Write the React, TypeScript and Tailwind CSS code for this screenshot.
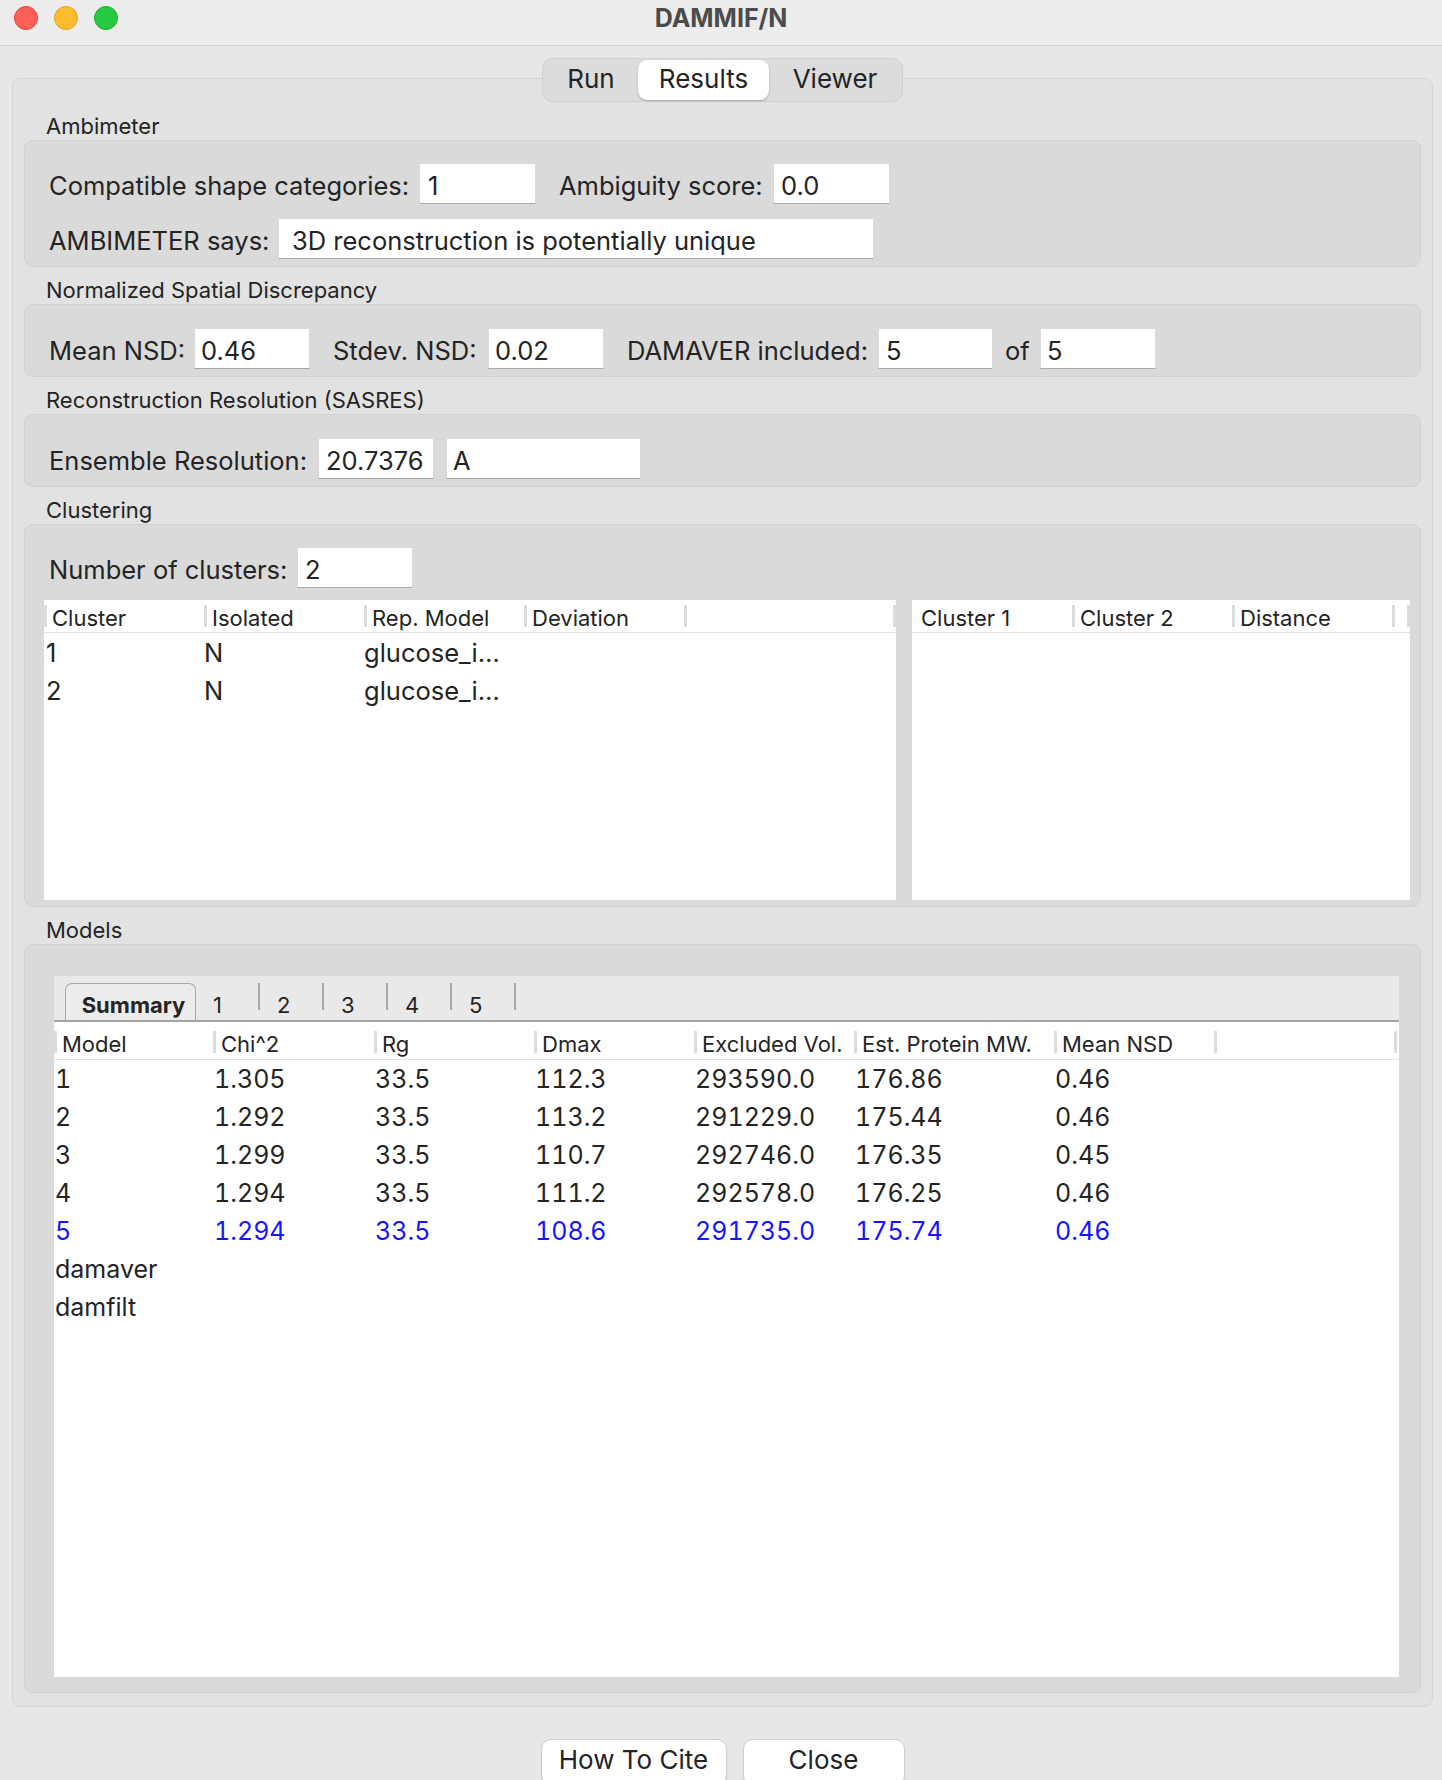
import React from "react";

type Kids = { children?: React.ReactNode };

function Field({ className, children }: { className: string } & Kids) {
  return (
    <div
      className={
        "h-[41px] shrink-0 bg-white border border-[#dadada] border-b-[#a9a9a9] flex items-center pt-[5px] text-[25.5px] leading-none whitespace-nowrap " +
        className
      }
    >
      {children}
    </div>
  );
}

function Label({ className, children }: { className: string } & Kids) {
  return (
    <span className={"shrink-0 whitespace-nowrap text-[25.5px] leading-none pt-[5px] " + className}>{children}</span>
  );
}

function GroupTitle({ first, children }: { first?: boolean } & Kids) {
  return (
    <div className={"h-[27px] leading-[27px] text-[22px] pl-[22px] " + (first ? "" : "mt-[10px]")}>{children}</div>
  );
}

function Bar() {
  return <div className="w-[3px] h-[22px] bg-[#dcdcdc] shrink-0" />;
}

function HeadCell({ className, label, bar = true }: { className: string; label: string; bar?: boolean }) {
  return (
    <div className={"h-full flex items-center shrink-0 " + className}>
      {bar && <Bar />}
      <span className={"text-[22px] leading-none whitespace-nowrap pt-[4px] " + (bar ? "ml-[5px]" : "ml-[9px]")}>
        {label}
      </span>
    </div>
  );
}

const models = [
  ["1", "1.305", "33.5", "112.3", "293590.0", "176.86", "0.46"],
  ["2", "1.292", "33.5", "113.2", "291229.0", "175.44", "0.46"],
  ["3", "1.299", "33.5", "110.7", "292746.0", "176.35", "0.45"],
  ["4", "1.294", "33.5", "111.2", "292578.0", "176.25", "0.46"],
  ["5", "1.294", "33.5", "108.6", "291735.0", "175.74", "0.46"],
  ["damaver", "", "", "", "", "", ""],
  ["damfilt", "", "", "", "", "", ""],
];

const modelCols = ["w-[159px]", "w-[161px]", "w-[160px]", "w-[160px]", "w-[160px]", "w-[200px]", "w-[160px]"];

export default function App() {
  return (
    <div className="w-[1442px] h-[1780px] overflow-hidden bg-[#e7e7e7] font-['Inter','Noto_Sans',sans-serif] text-[#242424] flex flex-col">
      {/* window title bar */}
      <div className="h-[46px] shrink-0 bg-[#ececec] border-b border-[#d0d0d0] grid grid-cols-[1fr_auto_1fr] items-center pb-[9px]">
        <div className="flex gap-[16px] pl-[14px]">
          <div className="w-[24px] h-[24px] rounded-full bg-[#fe5f57] border border-[#e2463f]" />
          <div className="w-[24px] h-[24px] rounded-full bg-[#febc2e] border border-[#e0a228]" />
          <div className="w-[24px] h-[24px] rounded-full bg-[#28c840] border border-[#1fad32]" />
        </div>
        <div className="text-[25px] font-bold text-[#4b4b4b] leading-none">DAMMIF/N</div>
        <div />
      </div>

      <div className="pl-[12px] pr-[9px] flex flex-col">
        {/* segmented tab control */}
        <div className="mt-[12px] self-center relative z-10 -mb-[24px] h-[44px] w-[361px] rounded-[11px] bg-[#dcdcdc] border border-[#d0d0d0] flex items-center px-[1px] text-[26px] leading-none">
          <div className="w-[94px] text-center pb-[3px]">Run</div>
          <div className="w-[131px] h-[40px] bg-white rounded-[9px] shadow-[0_1px_2px_rgba(0,0,0,0.25)] flex items-center justify-center pb-[3px]">
            Results
          </div>
          <div className="flex-1 text-center pb-[3px]">Viewer</div>
        </div>

        {/* tab pane */}
        <div className="bg-[#e2e2e2] border border-[#d5d5d5] rounded-[8px] pt-[34px] pb-[13px] px-[11px] flex flex-col">
          <GroupTitle first>Ambimeter</GroupTitle>
          <div className="rounded-[9px] bg-[#dadada] border border-[#d1d1d1] pt-[22px] pb-[7px] pl-[24px] flex flex-col gap-[14px]">
            <div className="flex items-center">
              <Label className="w-[360px]">Compatible shape categories:</Label>
              <Field className="w-[117px] ml-[10px] pl-[8px]">1</Field>
              <Label className="w-[204px] ml-[23px]">Ambiguity score:</Label>
              <Field className="w-[117px] ml-[10px] pl-[7px]">0.0</Field>
            </div>
            <div className="flex items-center">
              <Label className="w-[219px]">AMBIMETER says:</Label>
              <Field className="w-[596px] ml-[10px] pl-[13px]">3D reconstruction is potentially unique</Field>
            </div>
          </div>

          <GroupTitle>Normalized Spatial Discrepancy</GroupTitle>
          <div className="rounded-[9px] bg-[#dadada] border border-[#d1d1d1] pt-[23px] pb-[7px] pl-[24px] flex items-center">
            <Label className="w-[135px]">Mean NSD:</Label>
            <Field className="w-[116px] ml-[10px] pl-[6px]">0.46</Field>
            <Label className="w-[145px] ml-[23px]">Stdev. NSD:</Label>
            <Field className="w-[116px] ml-[10px] pl-[6px]">0.02</Field>
            <Label className="w-[241px] ml-[23px]">DAMAVER included:</Label>
            <Field className="w-[115px] ml-[10px] pl-[7px]">5</Field>
            <Label className="w-[25px] ml-[12px]">of</Label>
            <Field className="w-[116px] ml-[10px] pl-[6px]">5</Field>
          </div>

          <GroupTitle>Reconstruction Resolution (SASRES)</GroupTitle>
          <div className="rounded-[9px] bg-[#dadada] border border-[#d1d1d1] pt-[23px] pb-[7px] pl-[24px] flex items-center">
            <Label className="w-[259px]">Ensemble Resolution:</Label>
            <Field className="w-[116px] ml-[10px] pl-[7px]">20.7376</Field>
            <Field className="w-[195px] ml-[12px] pl-[6px]">A</Field>
          </div>

          <GroupTitle>Clustering</GroupTitle>
          <div className="rounded-[9px] bg-[#dadada] border border-[#d1d1d1] pt-[22px] pb-[6px] flex flex-col">
            <div className="flex items-center pl-[24px]">
              <Label className="w-[238px]">Number of clusters:</Label>
              <Field className="w-[116px] ml-[10px] pl-[7px]">2</Field>
            </div>
            <div className="mt-[12px] pl-[19px] flex gap-[16px]">
              {/* cluster list */}
              <div className="w-[852px] h-[300px] bg-white flex flex-col">
                <div className="h-[33px] shrink-0 border-b border-[#e2e2e2] flex">
                  <HeadCell className="w-[160px]" label="Cluster" />
                  <HeadCell className="w-[160px]" label="Isolated" />
                  <HeadCell className="w-[160px]" label="Rep. Model" />
                  <HeadCell className="w-[160px]" label="Deviation" />
                  <div className="flex-1 flex items-center justify-between">
                    <Bar />
                    <Bar />
                  </div>
                </div>
                {[
                  ["1", "N", "glucose_i…"],
                  ["2", "N", "glucose_i…"],
                ].map((r) => (
                  <div key={r[0]} className="h-[38px] flex items-center pt-[2px] text-[25.5px] leading-none">
                    <div className="w-[160px] pl-[2px]">{r[0]}</div>
                    <div className="w-[160px]">{r[1]}</div>
                    <div className="w-[160px]">{r[2]}</div>
                  </div>
                ))}
              </div>
              {/* cluster distance list */}
              <div className="w-[498px] h-[300px] bg-white flex flex-col">
                <div className="h-[33px] shrink-0 border-b border-[#e2e2e2] flex">
                  <HeadCell className="w-[160px]" label="Cluster 1" bar={false} />
                  <HeadCell className="w-[160px]" label="Cluster 2" />
                  <HeadCell className="w-[160px]" label="Distance" />
                  <div className="flex-1 flex items-center justify-between">
                    <Bar />
                    <Bar />
                  </div>
                </div>
              </div>
            </div>
          </div>

          <GroupTitle>Models</GroupTitle>
          <div className="rounded-[9px] bg-[#dadada] border border-[#d1d1d1] pt-[31px] pb-[15px] pl-[29px] pr-[21px]">
            <div className="h-[701px] flex flex-col">
              {/* model tabs */}
              <div className="h-[44px] shrink-0 bg-[#e9e9e9] flex items-end pl-[11px]">
                <div className="w-[131px] h-[37px] border border-b-0 border-[#a9a9a9] rounded-t-[7px] bg-[#ececec] flex items-end justify-center pl-[6px] pb-[2px]">
                  <span className="text-[22px] font-bold leading-[26px]">Summary</span>
                </div>
                {["1", "2", "3", "4", "5"].map((t) => (
                  <div key={t} className="w-[64px] h-[37px] flex items-start">
                    <div className="flex-1 h-full flex items-end pl-[17px] pb-[2px]">
                      <span className="text-[22px] leading-[26px]">{t}</span>
                    </div>
                    <div className="w-[2px] h-[27px] bg-[#a8a8a8]" />
                  </div>
                ))}
              </div>
              <div className="h-[2px] shrink-0 bg-[#a3a3a3]" />
              <div className="flex-1 bg-white flex flex-col">
                <div className="h-[38px] shrink-0 border-b border-[#e2e2e2] flex pt-[3px]">
                  <HeadCell className={modelCols[0]} label="Model" />
                  <HeadCell className={modelCols[1]} label="Chi^2" />
                  <HeadCell className={modelCols[2]} label="Rg" />
                  <HeadCell className={modelCols[3]} label="Dmax" />
                  <HeadCell className={modelCols[4]} label="Excluded Vol." />
                  <HeadCell className={modelCols[5]} label="Est. Protein MW." />
                  <HeadCell className={modelCols[6]} label="Mean NSD" />
                  <div className="flex-1 flex items-center justify-between pr-[2px]">
                    <Bar />
                    <Bar />
                  </div>
                </div>
                {models.map((r, i) => (
                  <div
                    key={r[0]}
                    className={
                      "h-[38px] shrink-0 flex items-center text-[25px] leading-none [font-feature-settings:'tnum'] " +
                      (i === 4 ? "text-[#1414ff]" : "")
                    }
                  >
                    {r.map((c, j) => (
                      <div key={j} className={"shrink-0 whitespace-nowrap pl-[1px] " + modelCols[j]}>
                        {c}
                      </div>
                    ))}
                  </div>
                ))}
              </div>
            </div>
          </div>
        </div>

        {/* dialog buttons */}
        <div className="mt-[32px] self-center flex gap-[16px]">
          <div className="w-[186px] h-[46px] bg-white border border-[#cdcdcd] rounded-[10px] shadow-[0_1px_1px_rgba(0,0,0,0.15)] flex items-center justify-center pb-[5px] text-[26px] leading-none">
            How To Cite
          </div>
          <div className="w-[162px] h-[46px] bg-white border border-[#cdcdcd] rounded-[10px] shadow-[0_1px_1px_rgba(0,0,0,0.15)] flex items-center justify-center pb-[5px] text-[26px] leading-none">
            Close
          </div>
        </div>
      </div>
    </div>
  );
}
